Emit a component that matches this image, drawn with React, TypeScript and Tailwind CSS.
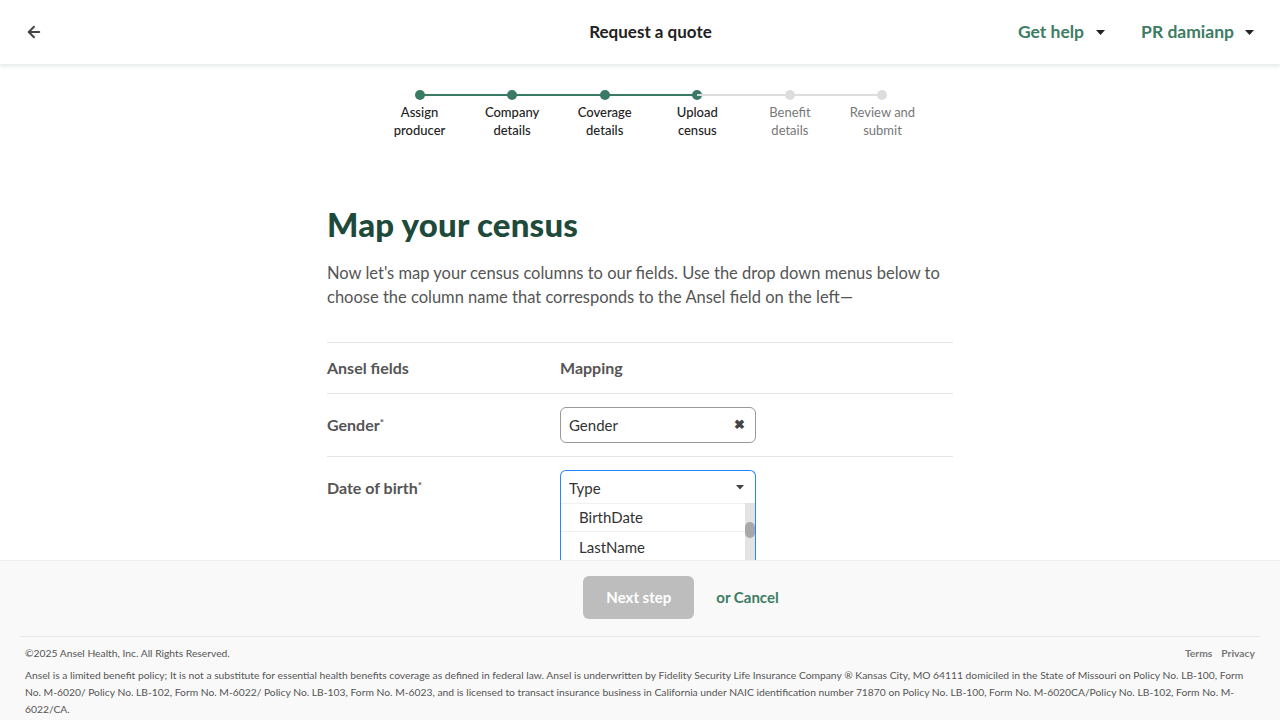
import { ArrowLeft } from "lucide-react";

const steps = [
  { label: ["Assign", "producer"], done: true },
  { label: ["Company", "details"], done: true },
  { label: ["Coverage", "details"], done: true },
  { label: ["Upload", "census"], done: true },
  { label: ["Benefit", "details"], done: false },
  { label: ["Review and", "submit"], done: false },
];

function Caret({ className = "" }: { className?: string }) {
  return (
    <svg className={className} width="9" height="5" viewBox="0 0 9 5">
      <path d="M0 0h9L4.5 5z" fill="currentColor" />
    </svg>
  );
}

function Stepper() {
  return (
    <div className="flex justify-center pt-[26px] pl-[22px]">
      {steps.map((s, i) => (
        <div key={i} className="relative w-[92.6px] flex flex-col items-center">
          {i > 0 && (
            <div
              className={`absolute top-[4px] right-1/2 w-full h-[2px] ${
                s.done ? "bg-[#3b7a62]" : "bg-[#dddddd]"
              }`}
            />
          )}
          <div
            className={`relative w-[10px] h-[10px] rounded-full ${
              s.done ? "bg-[#3b7a62]" : "bg-[#dddddd]"
            }`}
          />
          <div
            className={`mt-[3px] text-[13px] leading-[18px] text-center ${
              s.done ? "text-[#222] font-medium" : "text-[#777]"
            }`}
          >
            {s.label[0]}
            <br />
            {s.label[1]}
          </div>
        </div>
      ))}
    </div>
  );
}

export default function App() {
  return (
    <div className="h-screen flex flex-col bg-white font-['Lato',sans-serif] text-[#555] overflow-hidden">
      {/* Header */}
      <header className="h-[64px] shrink-0 flex items-center pl-[25px] pr-[26px] bg-white shadow-[0_2px_4px_rgba(60,110,100,0.15)] relative z-10">
        <ArrowLeft className="w-[18px] h-[18px] text-[#444]" strokeWidth={2.6} />
        <div className="flex-1 text-center text-[17px] font-bold text-[#222] pl-[240px]">
          Request a quote
        </div>
        <div className="flex items-center gap-[36px]">
          <button className="flex items-center gap-[12px] text-[17.5px] font-bold text-[#3d7d63]">
            Get help <Caret className="text-[#222]" />
          </button>
          <button className="flex items-center gap-[11px] text-[17.5px] font-bold text-[#3d7d63]">
            PR damianp <Caret className="text-[#222]" />
          </button>
        </div>
      </header>

      <main className="flex-1 overflow-hidden">
        <Stepper />
        <div className="w-[626px] mx-auto pt-[65px]">
          <h1 className="text-[33px] leading-[40px] font-black text-[#1d4a3b] tracking-[0.2px]">
            Map your census
          </h1>
          <p className="mt-[17px] text-[16.5px] leading-[24px] text-[#555]">
            Now let's map your census columns to our fields. Use the drop down menus below to choose the
            column name that corresponds to the Ansel field on the left—
          </p>

          <div className="mt-[33px] border-t border-[#e5e5e5]">
            <div className="flex items-center h-[51px] border-b border-[#e5e5e5] text-[16px] font-bold text-[#555]">
              <div className="w-[233px]">Ansel fields</div>
              <div>Mapping</div>
            </div>
            <div className="flex items-center h-[63px] border-b border-[#e5e5e5]">
              <div className="w-[233px] text-[16px] font-bold text-[#555]">
                Gender<sup className="text-[10px]">*</sup>
              </div>
              <div className="w-[196px] h-[36px] rounded-[6px] border border-[#999] flex items-center justify-between px-[8px] text-[15px] text-[#333]">
                <span>Gender</span>
                <span className="text-[13px] font-bold text-[#444] pr-[2px]">✖</span>
              </div>
            </div>
            <div className="flex items-start pt-[13px]">
              <div className="w-[233px] pt-[6px] text-[16px] font-bold text-[#555]">
                Date of birth<sup className="text-[10px]">*</sup>
              </div>
              <div className="w-[196px] rounded-t-[6px] border border-[#2684ff] border-b-0">
                <div className="h-[32px] flex items-center justify-between px-[8px] text-[15px] text-[#333]">
                  <span className="pt-[2px]">Type</span>
                  <svg width="8" height="5" viewBox="0 0 8 5" className="mr-[3px] text-[#444]">
                    <path d="M0 0h8L4 4.5z" fill="currentColor" />
                  </svg>
                </div>
                <div className="flex">
                  <div className="flex-1 text-[15px] text-[#333]">
                    <div className="h-[29px] flex items-center pl-[18px] border-t border-b border-[#f0f0f0]">BirthDate</div>
                    <div className="h-[31px] flex items-center pl-[18px]">LastName</div>
                  </div>
                  <div className="w-[10px] bg-[#e3e3e3] pt-[19px]">
                    <div className="w-[10px] h-[16px] rounded-full bg-[#a8a8a8]" />
                  </div>
                </div>
              </div>
            </div>
          </div>
        </div>
      </main>

      {/* Footer */}
      <footer className="h-[160px] shrink-0 bg-[#f9f9f9] border-t border-[#eeeeee] px-[20px]">
        <div className="flex items-center justify-center gap-[22px] h-[75px] pb-[2px] pl-[82px]">
          <button className="w-[111px] h-[43px] rounded-[6px] bg-[#bdbdbd] text-white text-[15px] font-bold">
            Next step
          </button>
          <button className="text-[15px] font-bold text-[#3d7d63]">or Cancel</button>
        </div>
        <div className="border-t border-[#e8e8e8] px-[5px] pt-[9px] text-[10.3px] text-[#555]">
          <div className="flex justify-between">
            <span>©2025 Ansel Health, Inc. All Rights Reserved.</span>
            <span className="flex gap-[9px] font-bold text-[#777]">
              <span>Terms</span>
              <span>Privacy</span>
            </span>
          </div>
          <p className="mt-[6px] leading-[17px]">
            Ansel is a limited benefit policy; It is not a substitute for essential health benefits coverage as defined in
            federal law. Ansel is underwritten by Fidelity Security Life Insurance Company ® Kansas City, MO 64111 domiciled
            in the State of Missouri on Policy No. LB-100, Form No. M-6020/ Policy No. LB-102, Form No. M-6022/ Policy No.
            LB-103, Form No. M-6023, and is licensed to transact insurance business in California under NAIC identification
            number 71870 on Policy No. LB-100, Form No. M-6020CA/Policy No. LB-102, Form No. M-6022/CA.
          </p>
        </div>
      </footer>
    </div>
  );
}
